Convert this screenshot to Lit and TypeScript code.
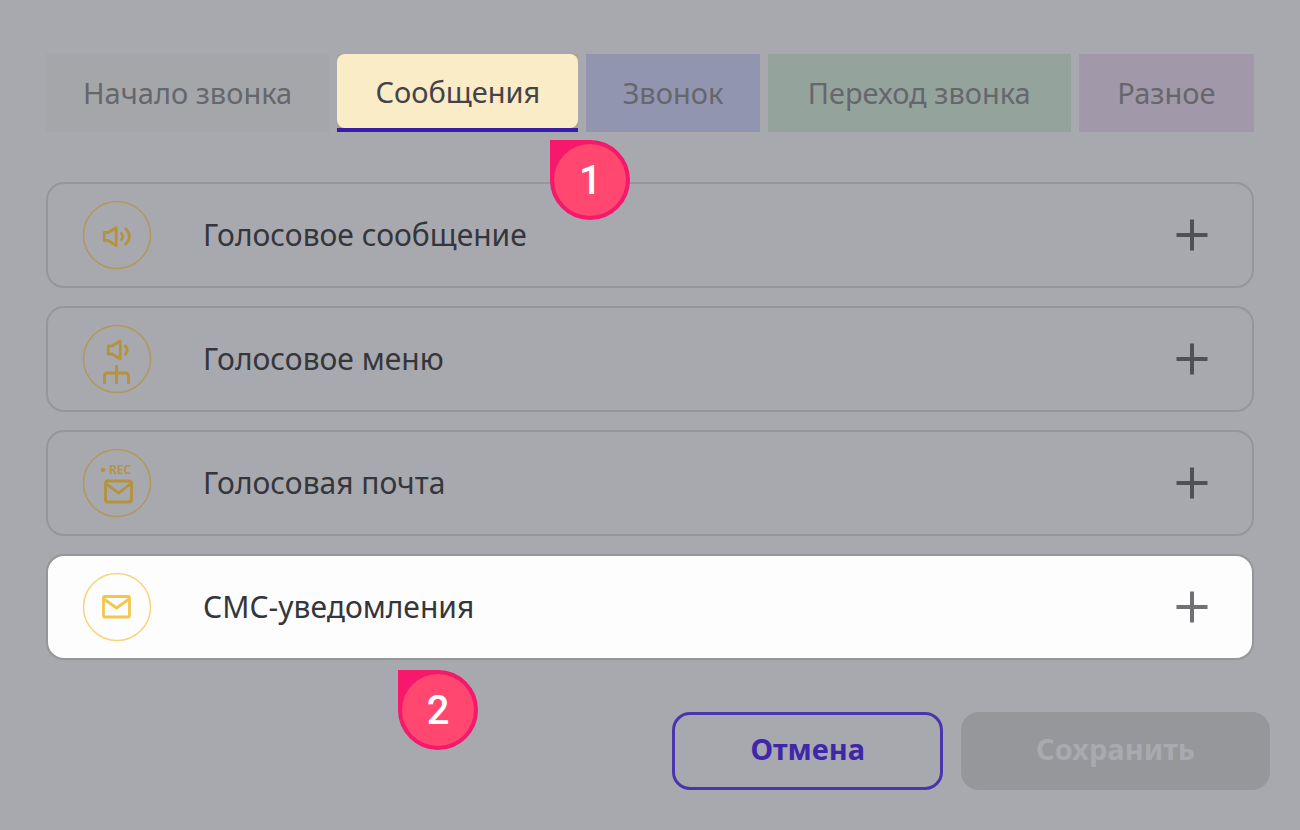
import { LitElement, html, css, svg } from "lit";
import { customElement, state } from "lit/decorators.js";
import { classMap } from "lit/directives/class-map.js";

const tabs = [
  { id: "start", label: "Начало звонка" },
  { id: "messages", label: "Сообщения" },
  { id: "call", label: "Звонок" },
  { id: "transfer", label: "Переход звонка" },
  { id: "misc", label: "Разное" },
];

const icons = {
  voice: svg`
    <path d="M22.200 32.500h4l8-5v18l-8-5h-4z" />
    <path d="M38.500 32.500q4.500 4 0 8" />
    <path d="M43 28q8.500 8.500 0 17" />`,
  menu: svg`
    <path d="M26.200 22h4l8-5v18l-8-5h-4z" />
    <path d="M42.500 21q5.500 5 0 10" />
    <path d="M34.500 41v19M22.500 60v-8q0-3 3-3h18q3 0 3 3v8" />`,
  mail: svg`
    <rect x="23.500" y="33" width="26" height="21" rx="2.500" />
    <path d="M24.500 36l12 9 12-9" />
    <circle class="fill" cx="21" cy="22" r="2.200" />
    <text class="fill rec" x="27" y="26">REC</text>`,
  sms: svg`
    <rect x="21.500" y="24.500" width="26" height="20.500" rx="1" />
    <path d="M22 27l12.500 9 12.500-9" />`,
};

const actions = [
  { icon: icons.voice, label: "Голосовое сообщение" },
  { icon: icons.menu, label: "Голосовое меню" },
  { icon: icons.mail, label: "Голосовая почта" },
  { icon: icons.sms, label: "СМС-уведомления", active: true },
];

@customElement("app-root")
export class AppRoot extends LitElement {
  static styles = css`
    :host {
      display: block;
      font-family: "Noto Sans", "Open Sans", sans-serif;
      font-size: 30px;
      line-height: 38px;
      color: #35363c;
    }
    * {
      box-sizing: border-box;
    }
    button {
      font: inherit;
      color: inherit;
      border: 0;
      padding: 0;
      margin: 0;
      background: none;
      cursor: pointer;
    }
    .page {
      min-height: 100vh;
      padding: 54px 30px 40px 46px;
      background: #a8a9ae;
    }
    .tabs {
      display: grid;
      grid-template-columns: 283fr 241fr 173fr 303fr 175fr;
      gap: 8px;
      margin-right: 16px;
      font-size: 29px;
    }
    .cell {
      position: relative;
      display: grid;
    }
    .tab {
      height: 78px;
      padding-bottom: 2px;
      color: #66676c;
      white-space: nowrap;
    }
    .start {
      background: #a5a6aa;
    }
    .call {
      background: #9195b0;
    }
    .transfer {
      background: #94a49d;
    }
    .misc {
      background: #a198a9;
    }
    .messages {
      background: #a8a28f;
    }
    .caption {
      display: block;
      padding-top: 2px;
      line-height: 72px;
    }
    .messages .caption {
      background: #f9ecc6;
      border-radius: 8px;
    }
    .selected {
      color: #44434a;
      border-bottom: 4px solid #3a1cab;
      padding-bottom: 0;
    }
    .list {
      display: grid;
      gap: 18px;
      margin: 50px 16px 0 0;
      padding: 0;
      list-style: none;
    }
    .row {
      position: relative;
      display: flex;
      align-items: center;
      height: 106px;
      padding: 0 43px 0 34px;
      border: 2px solid #95969a;
      border-radius: 18px;
    }
    .active {
      background: #fdfdfd;
    }
    .name {
      flex: 1;
      margin-left: 51px;
    }
    .icon {
      width: 70px;
      height: 70px;
      fill: none;
      stroke: #b5923b;
      stroke-width: 2.8;
      stroke-linejoin: round;
    }
    .active .icon {
      stroke: #f3c64e;
    }
    .ring {
      stroke-width: 1.5;
      opacity: 0.75;
    }
    .fill {
      fill: #b5923b;
      stroke: none;
    }
    .rec {
      font: 600 12px "Noto Sans", sans-serif;
    }
    .add {
      display: block;
      width: 34px;
      height: 34px;
    }
    .plus {
      display: block;
      stroke: #505156;
      stroke-width: 4;
    }
    .active .plus {
      stroke: #707075;
    }
    .marker {
      position: absolute;
      z-index: 1;
      width: 80px;
      height: 80px;
      border: 4px solid #f5186b;
      border-radius: 0 50% 50% 50%;
      background: #f5186b;
      color: #fff;
      font: 500 40px/74px Roboto, sans-serif;
      text-align: center;
    }
    .disc {
      display: block;
      height: 72px;
      border-radius: 50%;
      background: #ff476f;
    }
    .first {
      top: 86px;
      right: -52px;
    }
    .second {
      top: 114px;
      left: 350px;
    }
    .footer {
      display: flex;
      justify-content: flex-end;
      gap: 18px;
      margin-top: 52px;
      font-size: 29px;
      font-weight: 700;
    }
    .button {
      height: 78px;
      padding: 0 75px 4px;
      border-radius: 18px;
    }
    .cancel {
      border: 3px solid #4b35ac;
      color: #3f27a9;
    }
    .save {
      background: #96979b;
      color: #a9aaaf;
    }
  `;

  @state() private current = "messages";

  render() {
    return html`
      <main class="page">
        <div class="tabs" role="tablist">
          ${tabs.map(
            (t) => html`<div class="cell" role="presentation">
              <button
                class=${classMap({ tab: true, [t.id]: true, selected: t.id === this.current })}
                role="tab"
                aria-selected=${t.id === this.current}
                @click=${() => (this.current = t.id)}
              ><span class="caption">${t.label}</span></button>
              ${t.id === "messages"
                ? html`<span class="marker first"><span class="disc">1</span></span>`
                : null}
            </div>`
          )}
        </div>
        <ul class="list">
          ${actions.map(
            (a) => html`<li class=${classMap({ row: true, active: !!a.active })}>
              <svg class="icon" viewBox="0 0 70 70" aria-hidden="true">
                <circle class="ring" cx="35" cy="35" r="33.500" />
                ${a.icon}
              </svg>
              <span class="name">${a.label}</span>
              <button class="add" aria-label=${a.label}>
                <svg class="plus" viewBox="0 0 34 34"><path d="M1.500 17h31M17 1.500v31" /></svg>
              </button>
              ${a.active
                ? html`<span class="marker second"><span class="disc">2</span></span>`
                : null}
            </li>`
          )}
        </ul>
        <div class="footer">
          <button class="button cancel">Отмена</button>
          <button class="button save" disabled>Сохранить</button>
        </div>
      </main>
    `;
  }
}
